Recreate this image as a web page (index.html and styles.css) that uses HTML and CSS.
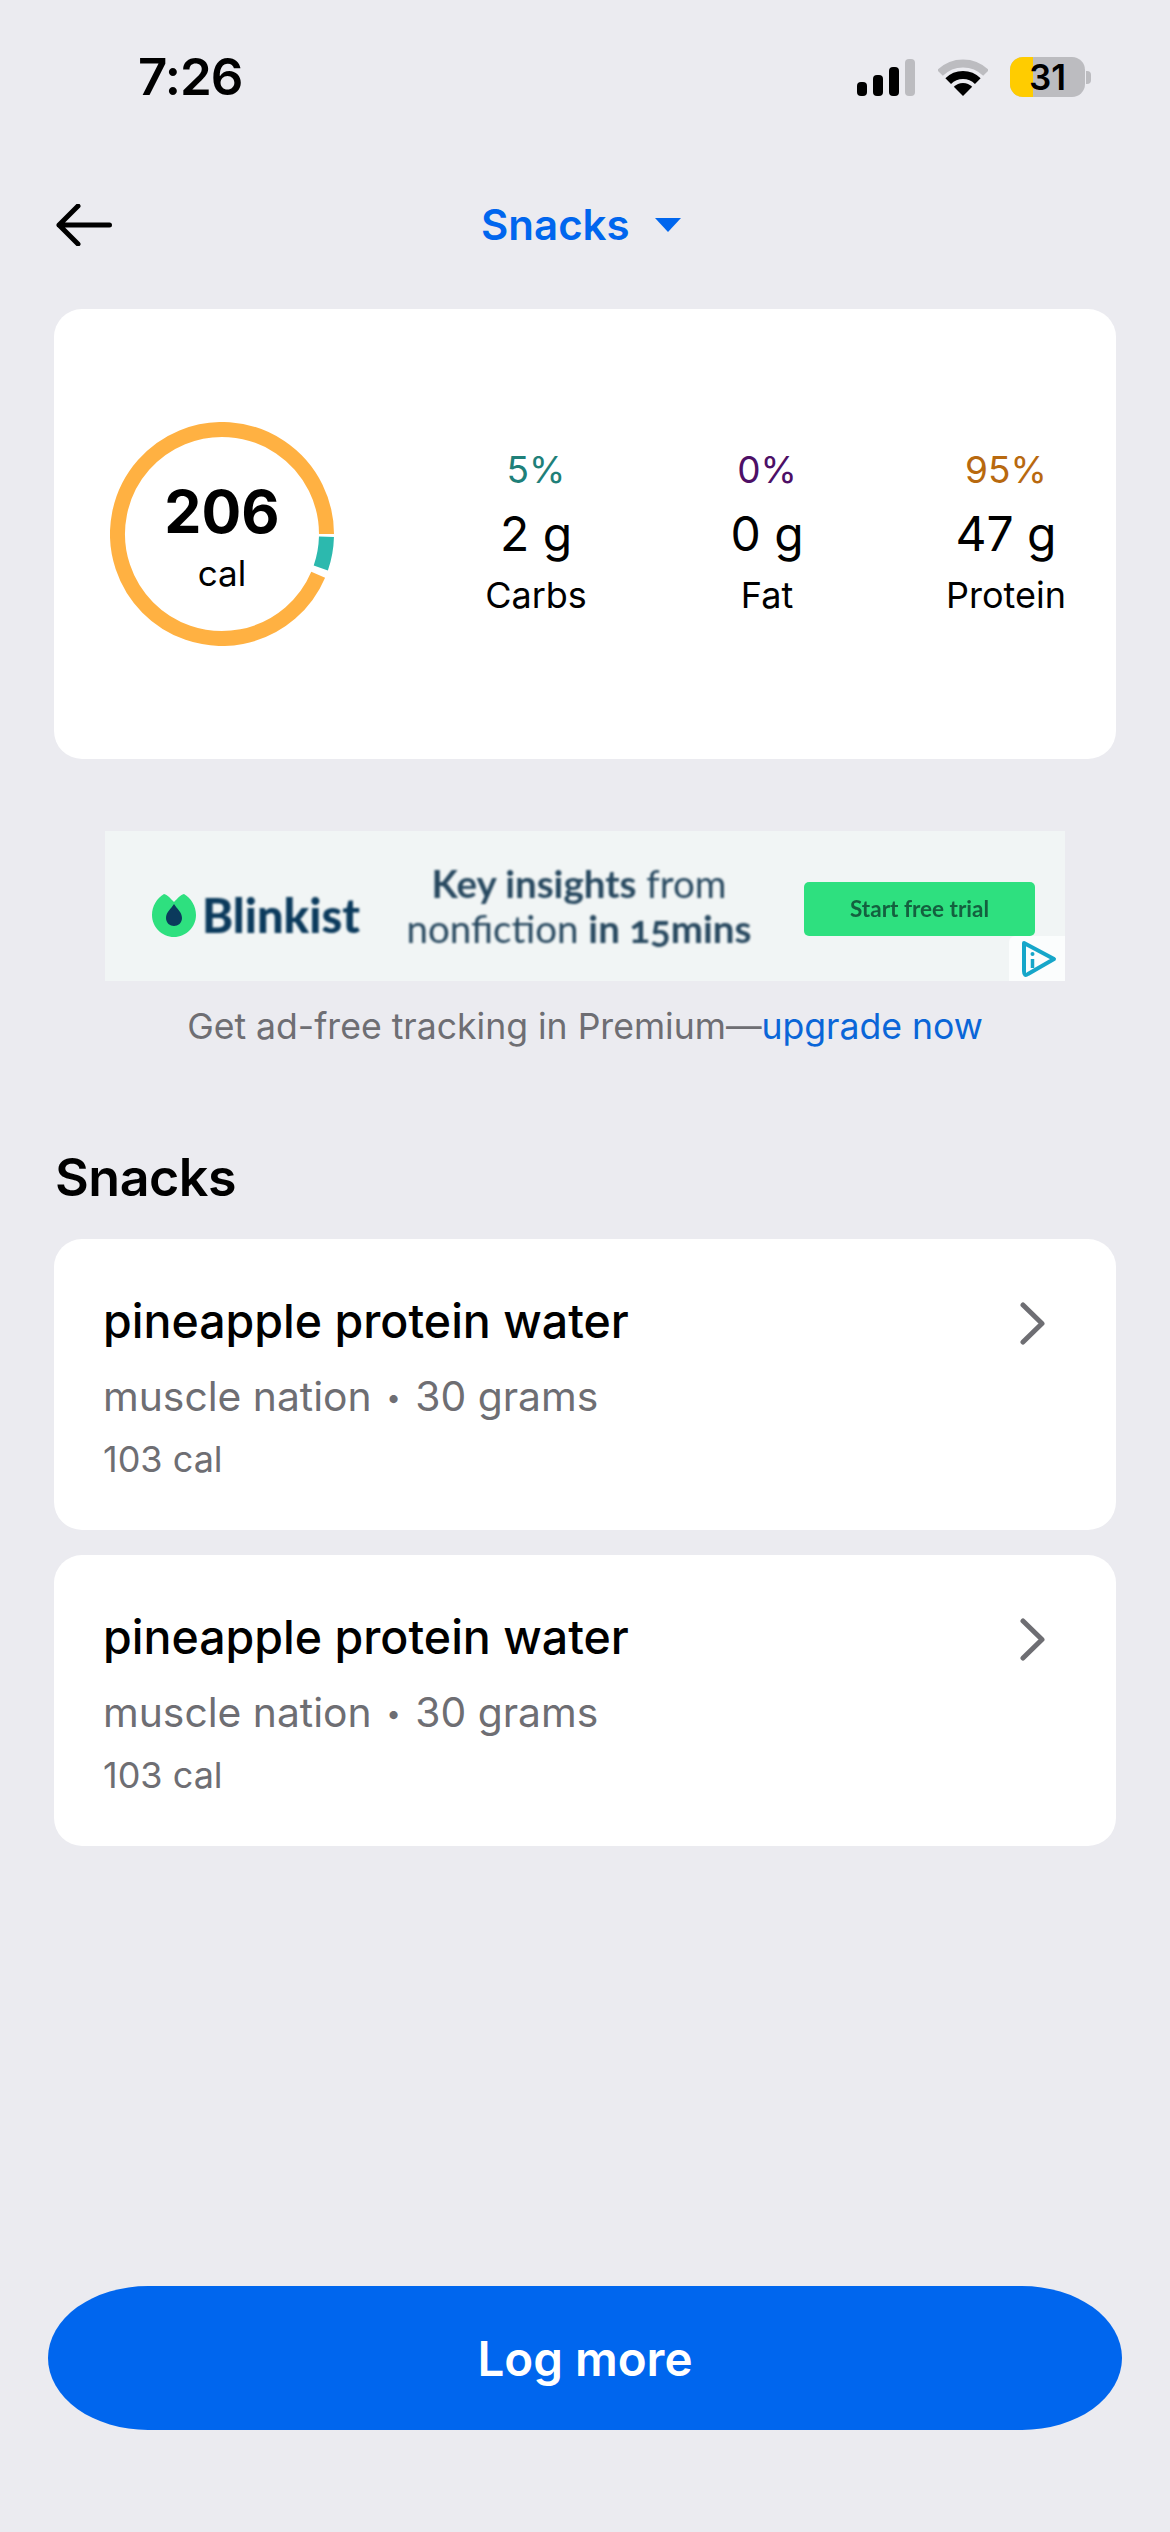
FILE: index.html

```html
<!DOCTYPE html>
<html>
<head>
    <title>Snacks</title>
    <link rel="stylesheet" href="styles.css">
</head>
<body>
    <div class="statusBar">
        <span class="time">7:26</span>
        <div class="statusIcons">
            <div class="signal">
                <span class="bar bar1"></span>
                <span class="bar bar2"></span>
                <span class="bar bar3"></span>
                <span class="bar bar4"></span>
            </div>
            <svg class="wifi" width="50" height="37" viewBox="0 0 50 37">
                <path d="M2 14A32.5 32.5 0 0 1 48 14" fill="none" stroke="#bcbcc0" stroke-width="8"/>
                <path d="M10.2 22.2A21 21 0 0 1 39.8 22.2" fill="none" stroke="#000" stroke-width="8"/>
                <path d="M25 37L15.8 27.8A13 13 0 0 1 34.2 27.8Z" fill="#000"/>
            </svg>
            <div class="battery">
                <div class="batteryBody">
                    <span class="batteryFill"></span>
                    <span class="batteryText">31</span>
                </div>
                <span class="batteryNub"></span>
            </div>
        </div>
    </div>

    <div class="nav">
        <svg class="backArrow" width="56" height="42" viewBox="0 0 56 42">
            <path d="M53.5 21H3M22 2L3 21L22 40" fill="none" stroke="#000" stroke-width="5" stroke-linecap="round" stroke-linejoin="round"/>
        </svg>
        <div class="navTitle">
            <span>Snacks</span>
            <span class="caret"></span>
        </div>
    </div>

    <div class="card summary">
        <div class="ring">
            <svg width="224" height="224" viewBox="0 0 224 224">
                <path d="M208.2 152.8A104.5 104.5 0 1 1 216.5 112" fill="none" stroke="#ffb142" stroke-width="15"/>
                <path d="M216.47 114.7A104.5 104.5 0 0 1 210.8 146" fill="none" stroke="#2cb9ae" stroke-width="15"/>
            </svg>
            <div class="ringLabel">
                <span class="calValue">206</span>
                <span class="calUnit">cal</span>
            </div>
        </div>
        <div class="macro">
            <span class="percent percentCarbs">5%</span>
            <span class="grams">2 g</span>
            <span class="macroName">Carbs</span>
        </div>
        <div class="macro">
            <span class="percent percentFat">0%</span>
            <span class="grams">0 g</span>
            <span class="macroName">Fat</span>
        </div>
        <div class="macro">
            <span class="percent percentProtein">95%</span>
            <span class="grams">47 g</span>
            <span class="macroName">Protein</span>
        </div>
    </div>

    <div class="ad">
        <div class="adBrand">
            <svg width="44" height="44" viewBox="0 0 44 44">
                <path d="M12 1C16 2 19 6 22 9C25 6 28 2 32 1C39 5 44 13 44 22C44 34 34 44 22 44C10 44 0 34 0 22C0 13 5 5 12 1Z" fill="#2ee07f"/>
                <path d="M22 11C25 16 30 19 30 25C30 30 26 33 22 33C18 33 14 30 14 25C14 19 19 16 22 11Z" fill="#0b3a5c"/>
            </svg>
            <span class="adName">Blinkist</span>
        </div>
        <div class="adCopy">
            <div><b>Key insights</b> from</div>
            <div>nonfiction <b>in 15mins</b></div>
        </div>
        <div class="adButton">Start free trial</div>
        <div class="adChoice">
            <svg width="36" height="38" viewBox="0 0 36 38">
                <path d="M3 3L33 19L7 34Q3 37 3 31Z" fill="none" stroke="#16a6c9" stroke-width="4" stroke-linejoin="round"/>
                <path d="M11.5 19V28" stroke="#16a6c9" stroke-width="3.5"/>
                <circle cx="11.5" cy="14" r="2" fill="#16a6c9"/>
            </svg>
        </div>
    </div>
    <p class="premium">Get ad-free tracking in Premium—<span class="upgrade">upgrade now</span></p>

    <h2 class="sectionTitle">Snacks</h2>

    <div class="card foodItem">
        <div class="foodText">
            <div class="foodName">pineapple protein water</div>
            <div class="foodBrand">muscle nation <span class="dot">•</span> 30 grams</div>
            <div class="foodCal">103 cal</div>
        </div>
        <svg class="chevron" width="27" height="43" viewBox="0 0 27 43">
            <path d="M4 3L23 21.5L4 40" fill="none" stroke="#6e6e73" stroke-width="5" stroke-linecap="round" stroke-linejoin="round"/>
        </svg>
    </div>

    <div class="card foodItem">
        <div class="foodText">
            <div class="foodName">pineapple protein water</div>
            <div class="foodBrand">muscle nation <span class="dot">•</span> 30 grams</div>
            <div class="foodCal">103 cal</div>
        </div>
        <svg class="chevron" width="27" height="43" viewBox="0 0 27 43">
            <path d="M4 3L23 21.5L4 40" fill="none" stroke="#6e6e73" stroke-width="5" stroke-linecap="round" stroke-linejoin="round"/>
        </svg>
    </div>

    <button class="logButton" type="button">Log more</button>
</body>
</html>
```

FILE: styles.css

```css
* {
    box-sizing: border-box;
}

html, body {
    margin: 0;
    padding: 0;
}

body {
    width: 1170px;
    height: 2532px;
    background-color: #ebebf0;
    color: #000;
    font-family: Inter, "Liberation Sans", sans-serif;
    display: flex;
    flex-direction: column;
    overflow: hidden;
}

.statusBar {
    display: flex;
    justify-content: space-between;
    align-items: center;
    height: 40px;
    margin-top: 57px;
    padding: 0 79px 0 138px;
}

.time {
    font-size: 51px;
    font-weight: 600;
    letter-spacing: -1px;
    line-height: 40px;
}

.statusIcons {
    display: flex;
    align-items: center;
}

.signal {
    display: flex;
    align-items: flex-end;
    gap: 6px;
    height: 37px;
    margin-right: 23px;
}

.bar {
    width: 10px;
    border-radius: 4px;
    background-color: #000;
}

.bar1 { height: 14px; }
.bar2 { height: 21px; }
.bar3 { height: 29px; }
.bar4 { height: 37px; background-color: #bcbcc0; }

.wifi {
    margin-right: 22px;
}

.battery {
    display: flex;
    align-items: center;
}

.batteryBody {
    position: relative;
    display: flex;
    justify-content: center;
    align-items: center;
    width: 75px;
    height: 40px;
    border-radius: 13px;
    background-color: #bcbcc0;
    overflow: hidden;
}

.batteryFill {
    position: absolute;
    left: 0;
    top: 0;
    bottom: 0;
    width: 23px;
    background-color: #ffcc00;
}

.batteryText {
    position: relative;
    font-size: 35px;
    font-weight: 600;
    line-height: 40px;
}

.batteryNub {
    width: 5px;
    height: 13px;
    margin-left: 1px;
    border-radius: 0 4px 4px 0;
    background-color: #bcbcc0;
}

.nav {
    display: flex;
    align-items: center;
    height: 42px;
    margin-top: 107px;
    padding-left: 56px;
}

.navTitle {
    display: flex;
    align-items: center;
    margin-left: 369px;
    color: #0066ee;
    font-size: 42px;
    font-weight: 600;
    line-height: 42px;
}

.caret {
    width: 0;
    height: 0;
    margin-left: 25px;
    border-left: 13px solid transparent;
    border-right: 13px solid transparent;
    border-top: 14px solid #0066ee;
}

.card {
    width: 1062px;
    margin-left: 54px;
    background-color: #fff;
    border-radius: 28px;
}

.summary {
    display: grid;
    grid-template-columns: 382px 231px 239px 200px;
    align-items: center;
    height: 450px;
    margin-top: 63px;
}

.ring {
    position: relative;
    width: 224px;
    height: 224px;
    margin-left: 56px;
}

.ring svg {
    display: block;
}

.ringLabel {
    position: absolute;
    left: 0;
    right: 0;
    top: 60px;
    display: flex;
    flex-direction: column;
    align-items: center;
}

.calValue {
    font-size: 59px;
    font-weight: 700;
    line-height: 60px;
}

.calUnit {
    margin-top: 11px;
    font-size: 35px;
    line-height: 40px;
}

.macro {
    display: flex;
    flex-direction: column;
    align-items: center;
    width: 200px;
    margin-top: -3px;
}

.percent {
    font-size: 37px;
    line-height: 44px;
}

.percentCarbs { color: #1f8079; }
.percentFat { color: #4d0f66; }
.percentProtein { color: #b8690f; }

.grams {
    margin-top: 13px;
    font-size: 48px;
    line-height: 58px;
}

.macroName {
    margin-top: 10px;
    font-size: 36px;
    line-height: 44px;
}

.ad {
    position: relative;
    display: flex;
    align-items: center;
    width: 960px;
    height: 150px;
    margin: 72px 0 0 105px;
    background-color: #f1f5f5;
    font-family: Lato, "Liberation Sans", sans-serif;
    color: #27485f;
}

.adBrand {
    display: flex;
    align-items: center;
    gap: 6px;
    margin: 17px 0 0 47px;
}

.adName {
    color: #0b3a5c;
    font-size: 47px;
    font-weight: 900;
    line-height: 48px;
    filter: blur(1px);
}

.adCopy {
    width: 350px;
    margin-left: 44px;
    font-size: 38.5px;
    font-variant-numeric: oldstyle-nums;
    line-height: 45px;
    text-align: center;
    white-space: nowrap;
    filter: blur(1px);
}

.adButton {
    width: 231px;
    height: 54px;
    margin: 6px 0 0 50px;
    border-radius: 5px;
    background-color: #2ee07f;
    color: #14603f;
    font-size: 22.5px;
    font-weight: 700;
    line-height: 54px;
    text-align: center;
    filter: blur(0.7px);
}

.adChoice {
    position: absolute;
    right: 0;
    bottom: 0;
    width: 56px;
    height: 45px;
    padding: 4px 0 0 12px;
    border-top-left-radius: 6px;
    background-color: #fbfdfd;
}

.adChoice svg {
    display: block;
}

.premium {
    margin: 24px 0 0;
    color: #6e6e73;
    font-size: 35.6px;
    line-height: 44px;
    text-align: center;
}

.upgrade {
    color: #0a66d8;
}

.sectionTitle {
    margin: 99px 0 0 55px;
    font-size: 52px;
    font-weight: 600;
    letter-spacing: -0.5px;
    line-height: 60px;
}

.foodItem {
    display: flex;
    justify-content: space-between;
    height: 291px;
    margin-top: 25px;
    padding: 52px 70px 0 49px;
}

.sectionTitle + .foodItem {
    margin-top: 31px;
}

.foodName {
    font-size: 46.5px;
    font-weight: 500;
    line-height: 60px;
}

.foodBrand {
    margin-top: 20px;
    color: #6e6e73;
    font-size: 40.8px;
    line-height: 50px;
}

.dot {
    font-size: 26px;
    vertical-align: 4px;
    margin: 0 3px;
}

.foodCal {
    margin-top: 14px;
    color: #6e6e73;
    font-size: 36px;
    line-height: 44px;
}

.chevron {
    margin-top: 11px;
}

.logButton {
    width: 1074px;
    height: 144px;
    margin: auto 0 102px 48px;
    border: none;
    border-radius: 100px / 72px;
    background-color: #0066ee;
    color: #fff;
    font-family: Inter, "Liberation Sans", sans-serif;
    font-size: 47.5px;
    font-weight: 600;
}
```
